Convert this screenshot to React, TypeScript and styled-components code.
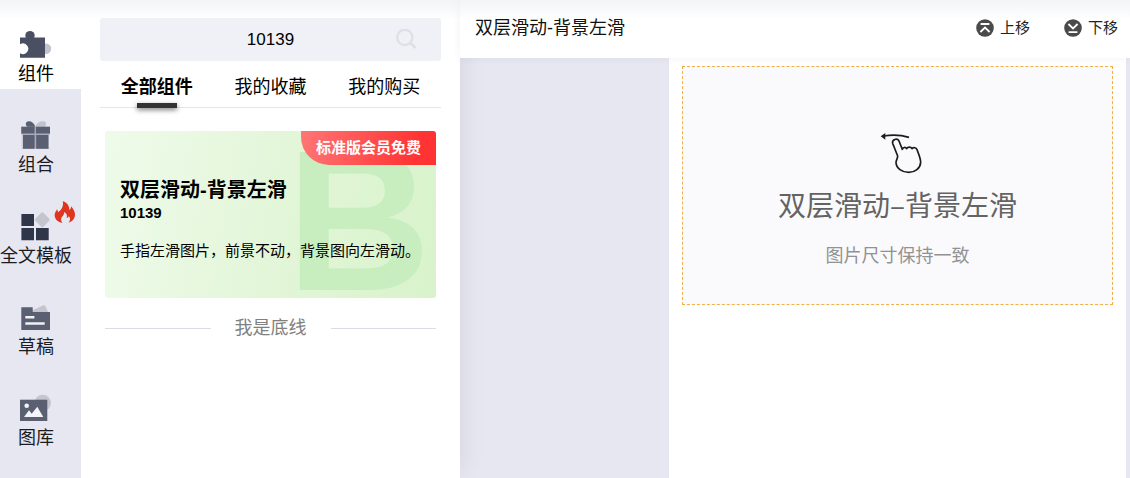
import React from "react";
import styled, { createGlobalStyle, css } from "styled-components";

const GlobalStyle = createGlobalStyle`
  *, *::before, *::after { box-sizing: border-box; }
  body {
    margin: 0;
    font-family: "Liberation Sans", "Noto Sans CJK SC", sans-serif;
    font-size: 18px;
    color: #000;
    background: #fff;
  }
  h1, h2, h3, p, ul, figure { margin: 0; padding: 0; }
  button, input { font: inherit; color: inherit; border: 0; background: none; padding: 0; }
  button { cursor: pointer; }
`;

const Page = styled.div`
  position: relative;
  display: flex;
  min-height: 100vh;
`;

const TopShade = styled.div`
  position: absolute;
  inset: 0 0 auto 0;
  height: 20px;
  background: linear-gradient(rgba(220, 225, 232, 0.36), rgba(220, 225, 232, 0));
  pointer-events: none;
  z-index: 5;
`;

const Sidebar = styled.nav`
  display: flex;
  flex-direction: column;
  gap: 2px;
  width: 81px;
  flex: none;
  background: #e7e7f1;
`;

const SideItem = styled.button<{ $active?: boolean }>`
  position: relative;
  display: flex;
  flex-direction: column;
  align-items: center;
  height: 89px;
  padding: 28px 9px 0 0;
  line-height: 28px;
  white-space: nowrap;
  color: ${(p) => (p.$active ? "#000" : "#1c1c1f")};
  background: ${(p) => (p.$active ? "#fff" : "transparent")};
`;

const SideIcon = styled.svg`
  display: block;
  width: 36px;
  height: 32px;
  flex: none;
`;

const Flame = styled.svg`
  position: absolute;
  top: 19px;
  left: 54px;
  width: 22px;
  height: 22px;
`;

const Panel = styled.section`
  position: relative;
  z-index: 2;
  width: 379px;
  flex: none;
  padding: 18px 19px;
  background: #fff;
  box-shadow: 12px 0 20px -6px rgba(0, 0, 0, 0.06);
`;

const SearchBox = styled.form`
  display: flex;
  align-items: center;
  height: 43px;
  padding: 0 24px 0 46px;
  border-radius: 3px;
  background: #f0f1f6;
`;

const SearchInput = styled.input`
  flex: 1;
  min-width: 0;
  font-size: 17px;
  text-align: center;
  outline: none;
`;

const SearchButton = styled.button`
  display: flex;
  width: 22px;
  height: 22px;
`;

const Tabs = styled.div`
  display: grid;
  grid-template-columns: repeat(3, 1fr);
  height: 47px;
  border-bottom: 1px solid #e6e6e8;
`;

const Tab = styled.button<{ $active?: boolean }>`
  position: relative;
  height: 47px;
  padding-top: 4px;
  line-height: 42px;
  ${(p) =>
    p.$active &&
    css`
      font-weight: 700;
      &::after {
        content: "";
        position: absolute;
        left: 50%;
        bottom: 0;
        width: 40px;
        height: 5px;
        margin-left: -20px;
        background: #333;
        box-shadow: 0 2px 5px rgba(0, 0, 0, 0.5);
      }
    `}
`;

const Card = styled.article`
  position: relative;
  margin: 23px 5px 0;
  padding: 45px 15px 35px;
  border-radius: 3px;
  background: linear-gradient(100deg, #effbea, #e3f6d9 50%, #d8f3cb);
`;

const Watermark = styled.span`
  position: absolute;
  right: 5px;
  bottom: 2px;
  font-size: 200px;
  line-height: 150px;
  font-weight: 700;
  color: #c8eec0;
`;

const Badge = styled.span`
  position: absolute;
  top: 0;
  right: 0;
  padding: 0 15px;
  border-radius: 0 3px 0 28px;
  font-size: 15px;
  line-height: 34px;
  font-weight: 700;
  color: #fff;
  background: linear-gradient(100deg, #ff7676, #ff3333 85%);
`;

const CardTitle = styled.h2`
  position: relative;
  font-size: 20px;
  line-height: 28px;
`;

const CardCode = styled.p`
  position: relative;
  font-size: 15px;
  line-height: 18px;
  font-weight: 700;
`;

const CardText = styled.p`
  position: relative;
  margin-top: 17px;
  font-size: 15px;
  line-height: 24px;
  white-space: nowrap;
`;

const EndLine = styled.div`
  display: flex;
  align-items: center;
  gap: 24px;
  margin: 16px 5px 0;
  line-height: 29px;
  color: #808080;
  &::before,
  &::after {
    content: "";
    flex: 1;
    height: 1px;
    background: #dcdce6;
  }
`;

const Workspace = styled.main`
  display: flex;
  flex-direction: column;
  flex: 1;
  min-width: 0;
  background: #e7e7f1;
`;

const Toolbar = styled.header`
  position: relative;
  z-index: 3;
  display: flex;
  align-items: center;
  justify-content: space-between;
  height: 58px;
  padding: 0 12px 3px 15px;
  background: #fff;
  box-shadow: 0 0 10px rgba(0, 0, 0, 0.05);
`;

const ToolbarTitle = styled.h1`
  font-size: 18px;
  line-height: 26px;
  font-weight: 400;
  color: #111;
`;

const Actions = styled.div`
  display: flex;
  gap: 34px;
`;

const Action = styled.button`
  display: flex;
  align-items: center;
  gap: 6px;
  font-size: 15px;
  line-height: 22px;
  color: #222;
`;

const Stage = styled.div`
  display: flex;
  justify-content: flex-end;
  flex: 1;
  padding-right: 4px;
`;

const Canvas = styled.div`
  width: 457px;
  padding: 8px 13px;
  background: #fff;
`;

const Block = styled.figure`
  display: flex;
  flex-direction: column;
  align-items: center;
  padding: 65px 0 35px;
  border: 1px dashed #f2b04a;
  background: #fafafc;
`;

const BlockTitle = styled.h3`
  margin-top: 10px;
  font-family: "Noto Sans CJK SC", sans-serif;
  font-size: 28px;
  line-height: 40px;
  font-weight: 400;
  color: #636363;
`;

const BlockCaption = styled.figcaption`
  margin-top: 19px;
  line-height: 26px;
  color: #929292;
`;

const icons = {
  puzzle: (
    <>
      <circle cx="28" cy="20.8" r="5.2" fill="#c3c3d0" />
      <circle cx="12" cy="7.6" r="4.7" fill="#4a4f63" />
      <path d="M2 9.5H27V29.7H2V25.2A5.3 5.3 0 1 0 2 16.3Z" fill="#4a4f63" />
    </>
  ),
  gift: (
    <>
      <path d="M17.5 8C18 4 22 2 25.5 2.2C29 2.5 28.5 6 26.5 8Z" fill="#c3c3ce" />
      <path d="M17.5 8C16 3.5 12.5 1.5 9.5 2.4C7 3.4 7.5 6.5 9.5 8Z" fill="#5a6072" />
      <rect x="3.3" y="7.7" width="28.7" height="22" fill="#a9abba" />
      <path d="M3.3 7.7H16.6V14.6H3.3ZM18 7.7H32V14.6H18ZM4.7 16H16.6V29.7H4.7ZM18.2 16H30.7V29.7H18.2Z" fill="#5a6072" />
      <path d="M3.3 15.4H4.7V29.7H3.3ZM30.7 15.4H32V29.7H30.7Z" fill="#e7e7f1" />
    </>
  ),
  grid: (
    <>
      <rect x="18.6" y="4" width="11.4" height="11.4" rx="1.5" transform="rotate(45 24.3 9.7)" fill="#c5c5cf" />
      <path d="M3.4 4H16V16H3.4ZM3.4 18H16V30.3H3.4ZM18 18H30.7V30.3H18Z" fill="#30364a" />
    </>
  ),
  draft: (
    <>
      <path d="M14 9.5L25.5 4.3Q27 4 27.5 5.3L30.5 12H14Z" fill="#c5c5cf" />
      <path d="M3.3 6.3H14.7V11H32V29H3.3Z" fill="#5a6072" />
      <path d="M7.3 15H16.4V17.6H7.3ZM7.3 21.3H26.7V23.7H7.3Z" fill="#f1f1f6" />
    </>
  ),
  image: (
    <>
      <circle cx="24.7" cy="11" r="8.3" fill="#c5c5cf" />
      <path d="M2 7.7H29.3V29H2Z" fill="#5a6072" />
      <circle cx="8.7" cy="13.7" r="2.3" fill="#f4f4f8" />
      <path d="M6 25L11 18.3L13.7 21.7L19.3 14.7L25.3 25Z" fill="#f4f4f8" />
    </>
  ),
};

const sections: { label: string; icon: keyof typeof icons; active?: boolean; hot?: boolean }[] = [
  { label: "组件", icon: "puzzle", active: true },
  { label: "组合", icon: "gift" },
  { label: "全文模板", icon: "grid", hot: true },
  { label: "草稿", icon: "draft" },
  { label: "图库", icon: "image" },
];

const tabs = ["全部组件", "我的收藏", "我的购买"];

const MoveIcon = ({ down }: { down?: boolean }) => (
  <svg width="18" height="18" viewBox="0 0 18 18" aria-hidden="true">
    <circle cx="9" cy="9" r="8.8" fill="#4a4a4a" />
    <path
      d={down ? "M4.4 5L9 9.4L13.6 5M4.6 13.2H13.4" : "M4.6 5H13.4M4.4 13L9 8.6L13.6 13"}
      fill="none"
      stroke="#fff"
      strokeWidth="1.8"
    />
  </svg>
);

export default function App() {
  return (
    <>
      <GlobalStyle />
      <Page>
        <TopShade />
        <Sidebar>
          {sections.map((s) => (
            <SideItem key={s.label} type="button" $active={s.active}>
              <SideIcon viewBox="0 0 36 32" aria-hidden="true">
                {icons[s.icon]}
              </SideIcon>
              {s.label}
              {s.hot && (
                <Flame viewBox="162 33 66 66" aria-hidden="true">
                  <path
                    d="M188 34C202 38 208 48 208 60C212 58 213 54 213 49C220 56 226 66 225 76C224 87 217 95 206 98C212 91 211 82 206 79C205 83 203 84 200 84C203 76 199 69 192 66C194 74 187 78 184 84C182 89 184 94 187 98C174 96 165 88 164 77C164 68 168 64 171 58C173 61 174 64 174 67C185 60 192 47 188 34Z"
                    fill="#e0341f"
                  />
                </Flame>
              )}
            </SideItem>
          ))}
        </Sidebar>

        <Panel>
          <SearchBox onSubmit={(e) => e.preventDefault()}>
            <SearchInput type="text" aria-label="搜索组件" defaultValue="10139" />
            <SearchButton type="submit" aria-label="搜索">
              <svg width="22" height="22" viewBox="0 0 22 22" fill="none" stroke="#dfe0e5" strokeWidth="2.4">
                <circle cx="9.8" cy="8.4" r="7.6" />
                <path d="M15.2 13.8L20.6 19" strokeWidth="2.8" />
              </svg>
            </SearchButton>
          </SearchBox>
          <Tabs role="tablist">
            {tabs.map((t, i) => (
              <Tab key={t} type="button" role="tab" aria-selected={i === 0} $active={i === 0}>
                {t}
              </Tab>
            ))}
          </Tabs>
          <Card>
            <Watermark aria-hidden="true">B</Watermark>
            <Badge>标准版会员免费</Badge>
            <CardTitle>双层滑动-背景左滑</CardTitle>
            <CardCode>10139</CardCode>
            <CardText>手指左滑图片，前景不动，背景图向左滑动。</CardText>
          </Card>
          <EndLine>我是底线</EndLine>
        </Panel>

        <Workspace>
          <Toolbar>
            <ToolbarTitle>双层滑动-背景左滑</ToolbarTitle>
            <Actions>
              <Action type="button">
                <MoveIcon />
                上移
              </Action>
              <Action type="button">
                <MoveIcon down />
                下移
              </Action>
            </Actions>
          </Toolbar>
          <Stage>
            <Canvas>
              <Block>
                <svg width="50" height="42" viewBox="338 66 150 126" fill="none" stroke="#1c1c1c" aria-hidden="true">
                  <path d="M370 78Q410 71 446 82" strokeWidth="5" />
                  <path d="M361 79L375 69L375 89Z" fill="#1c1c1c" stroke="none" />
                  <path
                    d="M412 138L397 100C394 90 410 82 416 93L426 118C427 112 436 110 439 116C442 110 452 110 455 116C459 111 468 113 470 119C475 132 481 146 481 157C480 175 464 187 445 187C425 187 408 175 407 158C407 150 412 146 412 138Z"
                    strokeWidth="5"
                    strokeLinejoin="round"
                  />
                </svg>
                <BlockTitle>双层滑动–背景左滑</BlockTitle>
                <BlockCaption>图片尺寸保持一致</BlockCaption>
              </Block>
            </Canvas>
          </Stage>
        </Workspace>
      </Page>
    </>
  );
}
